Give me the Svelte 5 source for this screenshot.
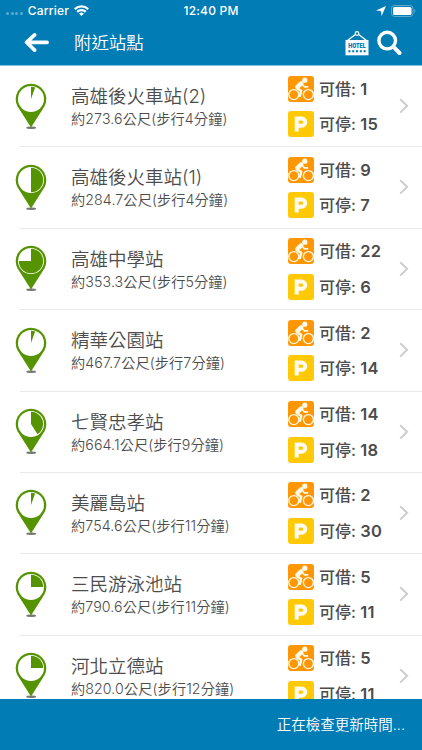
<script>
	const stations = [
		{ name: '高雄後火車站(2)', distance: '273.6', minutes: 4, bikes: 1, docks: 15, fill: 0.055 },
		{ name: '高雄後火車站(1)', distance: '284.7', minutes: 4, bikes: 9, docks: 7, fill: 0.5 },
		{ name: '高雄中學站', distance: '353.3', minutes: 5, bikes: 22, docks: 6, fill: 0.75 },
		{ name: '精華公園站', distance: '467.7', minutes: 7, bikes: 2, docks: 14, fill: 0.055 },
		{ name: '七賢忠孝站', distance: '664.1', minutes: 9, bikes: 14, docks: 18, fill: 0.41 },
		{ name: '美麗島站', distance: '754.6', minutes: 11, bikes: 2, docks: 30, fill: 0.055 },
		{ name: '三民游泳池站', distance: '790.6', minutes: 11, bikes: 5, docks: 11, fill: 0.25 },
		{ name: '河北立德站', distance: '820.0', minutes: 12, bikes: 5, docks: 11, fill: 0.25 }
	];

	/** @param {number} fill */
	function slice(fill) {
		const r = 12.2;
		const angle = fill * Math.PI * 2;
		const x = 16 + r * Math.sin(angle);
		const y = 16 - r * Math.cos(angle);
		return `M16 16V${16 - r}A${r} ${r} 0 ${fill > 0.5 ? 1 : 0} 1 ${x} ${y}Z`;
	}
</script>

<div class="screen">
	<header>
		<div class="status">
			<div class="carrier">
				<span class="dots"><i></i><i></i><i></i><i></i></span>
				<span>Carrier</span>
				<svg width="15" height="11" viewBox="0 0 15 11" fill="none" stroke="#fff" stroke-width="2.2">
					<path d="M.8 4.1a9.6 9.6 0 0 1 13.4 0M3.2 6.9a6.1 6.1 0 0 1 8.6 0" />
					<path d="M7.5 11 5.1 8.7a3.4 3.4 0 0 1 4.8 0Z" fill="#fff" stroke="none" />
				</svg>
			</div>
			<span class="time">12:40 PM</span>
			<div class="power">
				<svg width="10" height="10" viewBox="0 0 10 10"><path d="M10 0 5.6 10 5 5 0 4.4Z" fill="#fff" /></svg>
				<svg width="25" height="12" viewBox="0 0 25 12">
					<rect x=".5" y=".5" width="21.5" height="11" rx="3" fill="none" stroke="#5caacf" />
					<rect x="2" y="2" width="18.5" height="8" rx="1.6" fill="#fff" />
					<path d="M23.2 4v4c1.5-.6 1.5-3.4 0-4Z" fill="#5caacf" />
				</svg>
			</div>
		</div>
		<nav>
			<svg class="back" width="25" height="21" viewBox="0 0 25 21" fill="none" stroke="#fff" stroke-width="3.7" stroke-linecap="round" stroke-linejoin="round">
				<path d="M10.6 1.9 2.6 9.3l8 7.8M3.2 9.3h19.9" />
			</svg>
			<h1>附近站點</h1>
			<svg class="hotel" width="24" height="25" viewBox="0 0 24 25">
				<path d="M2.5 9.5 11 3M21.5 9.5 13 3" stroke="#fff" stroke-width="1.4" />
				<circle cx="12" cy="2.5" r="1.8" fill="#027cb5" stroke="#fff" stroke-width="1.2" />
				<path d="M.5 9h23v15.3H.5Z" fill="#fff" />
				<text x="12" y="16.7" textLength="17.5" lengthAdjust="spacingAndGlyphs">HOTEL</text>
				<path d="M3.4 20.2h17.3" stroke="#027cb5" stroke-width="2" stroke-dasharray="2.1 1.7" />
			</svg>
			<svg class="search" width="25" height="26" viewBox="0 0 25 26" fill="none" stroke="#fff" stroke-linecap="round">
				<circle cx="10.2" cy="10.6" r="8.3" stroke-width="3.4" />
				<path d="m17 17.3 5.5 5.7" stroke-width="4" />
			</svg>
		</nav>
	</header>

	<main>
		{#each stations as station}
			<div class="row">
				<svg class="pin" width="32" height="47" viewBox="0 0 32 47">
					<ellipse cx="16.2" cy="44.7" rx="5" ry="1.2" fill="#777" />
					<path d="M16 .8A15.3 15.3 0 0 0 2.5 23.3L16 44.6 29.5 23.3A15.3 15.3 0 0 0 16 .8Z" fill="#559400" />
					<circle cx="16" cy="16" r="13" fill="#fff" />
					<path d={slice(station.fill)} fill="#559400" />
				</svg>
				<div class="info">
					<h2>{station.name}</h2>
					<p>約{station.distance}公尺(步行{station.minutes}分鐘)</p>
				</div>
				<div class="counts">
					<div class="count">
						<svg width="26" height="26" viewBox="0 0 26 26">
							<rect width="26" height="26" rx="3" fill="#ff9705" />
							<g fill="none" stroke="#fffbea" stroke-linecap="round" stroke-linejoin="round">
								<circle cx="5.8" cy="18.6" r="5" stroke-width="1.3" />
								<circle cx="20.4" cy="18.6" r="5" stroke-width="1.3" />
								<path d="M13.2 7.4 9.4 10.8" stroke-width="4.4" />
								<path d="m8.9 12.2 4.3 2.6-1.2 5" stroke-width="2.4" />
								<path d="m14.2 8.3 2.1 2.5h3.2" stroke-width="1.7" />
							</g>
							<circle cx="16.8" cy="4.2" r="2.6" fill="#fffbea" />
						</svg>
						<span>可借: <b>{station.bikes}</b></span>
					</div>
					<div class="count">
						<svg width="26" height="26" viewBox="0 0 26 26">
							<rect width="26" height="26" rx="3" fill="#ffc905" />
							<path d="M8.7 20.6V7.6h5a3.3 3.3 0 0 1 0 7.1h-5" fill="none" stroke="#fffdf0" stroke-width="4" />
						</svg>
						<span>可停: <b>{station.docks}</b></span>
					</div>
				</div>
				<svg class="chevron" width="10" height="16" viewBox="0 0 10 16" fill="none" stroke="#cdcdd0" stroke-width="2">
					<path d="m1.2 1.2 6.9 6.6-6.9 6.8" />
				</svg>
			</div>
		{/each}
	</main>

	<footer>正在檢查更新時間...</footer>
</div>

<style>
	.screen {
		display: flex;
		flex-direction: column;
		height: 750px;
		overflow: hidden;
		background: #fff;
		color: #4c4c4c;
		font-family: Inter, 'Noto Sans CJK TC', sans-serif;
	}

	svg {
		display: block;
		flex: none;
	}

	header {
		flex: none;
		box-sizing: border-box;
		height: 66px;
		background: #027cb5;
		border-bottom: 1px solid #83c3e2;
		color: #fff;
	}

	.status {
		display: grid;
		grid-template-columns: 1fr auto 1fr;
		align-items: center;
		height: 21px;
		padding: 0 6px;
		font-size: 12px;
		font-weight: 500;
		letter-spacing: 0.2px;
	}

	.carrier,
	.power {
		display: flex;
		align-items: center;
		gap: 5px;
	}

	.power {
		justify-content: flex-end;
	}

	.dots {
		display: flex;
		gap: 1.6px;
		padding-top: 6px;
	}

	.dots i {
		width: 3px;
		height: 3px;
		border-radius: 50%;
		background: #5caacf;
	}

	nav {
		display: flex;
		align-items: center;
		height: 44px;
		padding: 0 20px 0 24px;
	}

	h1 {
		flex: 1;
		margin: 0 0 0 25px;
		font-size: 17.4px;
		font-weight: 350;
		line-height: 24px;
	}

	.hotel {
		margin-right: 8px;
	}

	.hotel text {
		fill: #027cb5;
		font: 900 6.5px Inter, sans-serif;
		text-anchor: middle;
	}

	main {
		flex: 1;
		min-height: 0;
		overflow: hidden;
	}

	.row {
		display: flex;
		box-sizing: border-box;
		height: 81.4px;
		padding-left: 15px;
		/* divider starts under the pin */
		background: linear-gradient(#e9e9e9, #e9e9e9) 20px 100% / 100% 1px no-repeat;
	}

	.pin {
		margin-top: 16.5px;
	}

	.info {
		width: 217px;
		margin: 17px 0 0 24px;
		white-space: nowrap;
	}

	h2 {
		margin: 0;
		font-size: 18.5px;
		font-weight: 350;
		line-height: 27px;
	}

	p {
		margin: 0;
		font-size: 14.2px;
		font-weight: 350;
		letter-spacing: 0.1px;
		line-height: 18px;
	}

	.counts {
		display: flex;
		flex-direction: column;
		gap: 9.5px;
		width: 111px;
		padding-top: 9.5px;
	}

	.count {
		display: flex;
		align-items: center;
		gap: 5px;
		height: 26px;
		font-size: 16px;
		font-weight: 500;
		line-height: 24px;
		white-space: nowrap;
	}

	.count b {
		font-size: 16.5px;
		font-weight: 600;
		letter-spacing: 0.4px;
	}

	.chevron {
		margin-top: 32px;
	}

	footer {
		flex: none;
		box-sizing: border-box;
		height: 51px;
		padding-right: 17px;
		background: #027cb5;
		color: #fff;
		font-size: 14.5px;
		font-weight: 350;
		line-height: 51px;
		text-align: right;
	}
</style>
